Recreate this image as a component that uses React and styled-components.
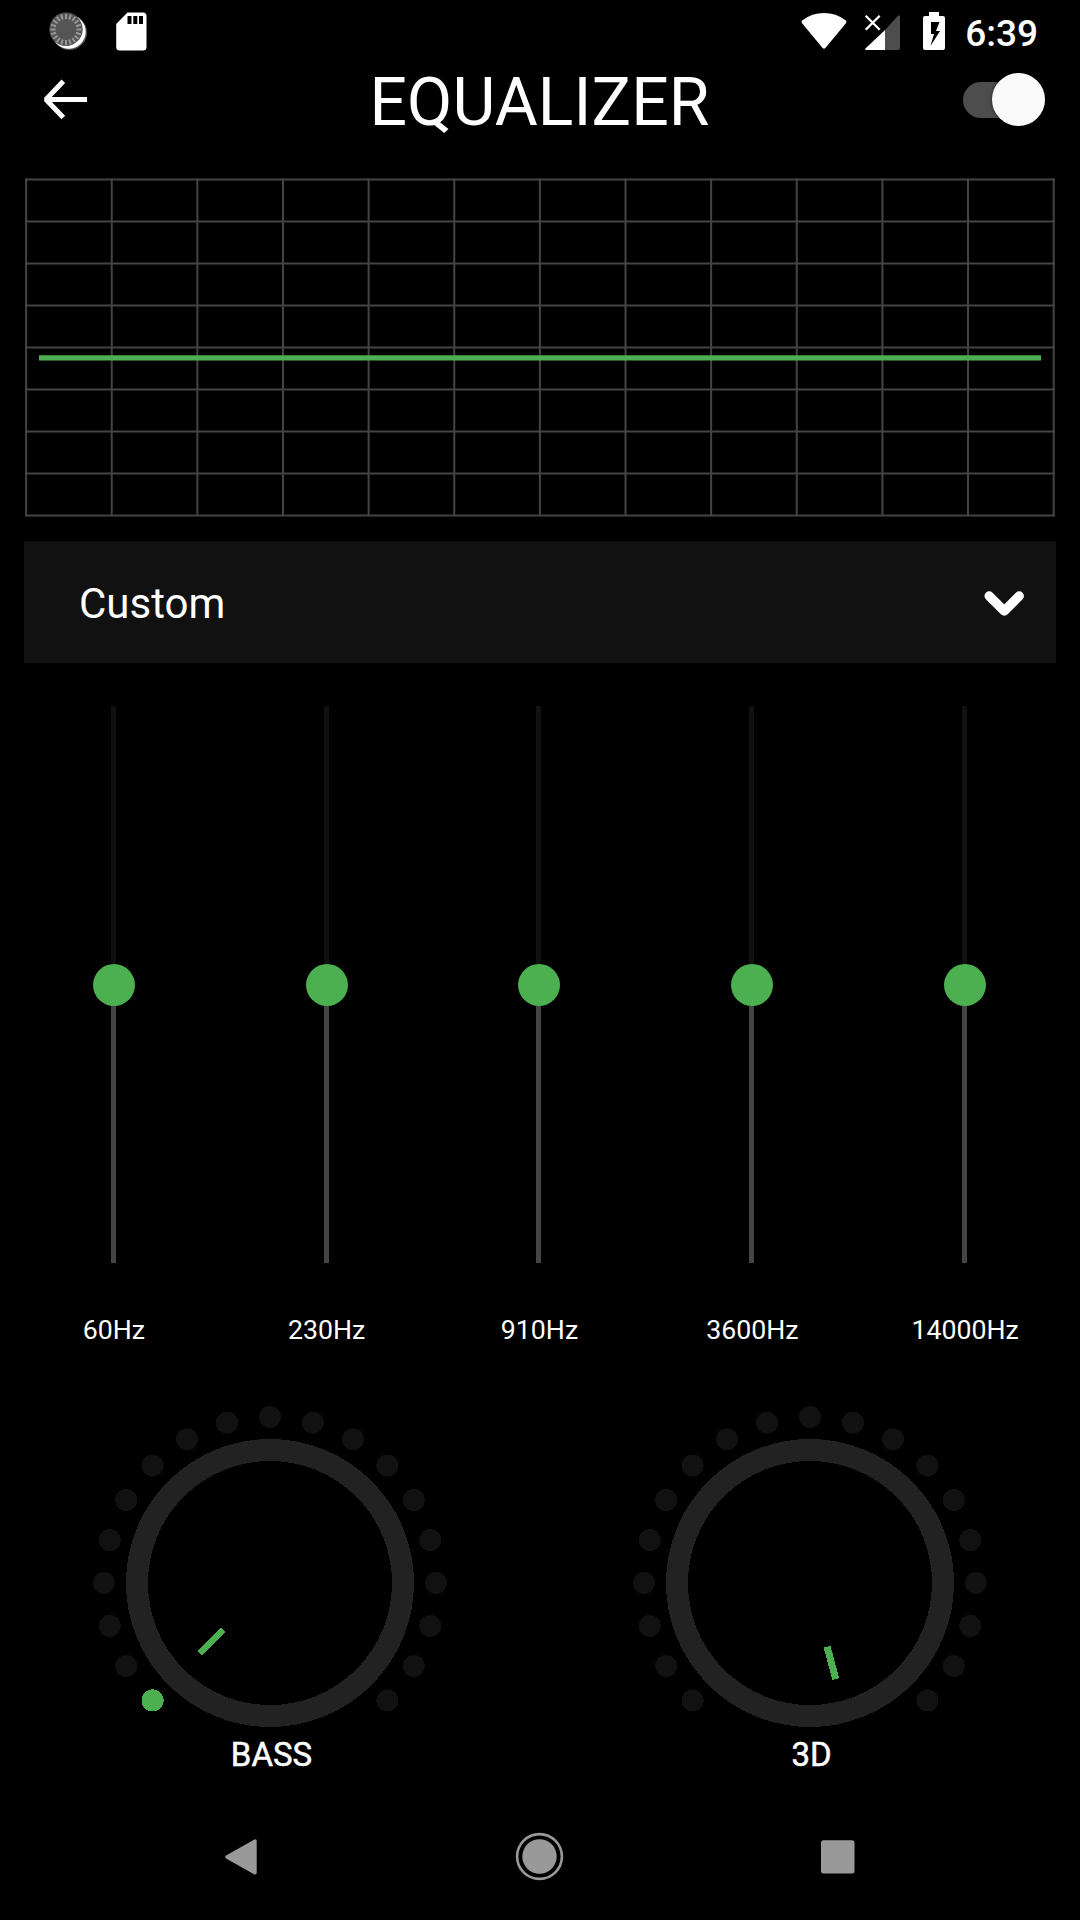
import React from "react";
import styled, { createGlobalStyle } from "styled-components";

const GREEN = "#4caf50";

const GlobalStyle = createGlobalStyle`
  *, *::before, *::after { box-sizing: border-box; }
  body { margin: 0; background: #000; }
  svg { display: block; flex: none; }
`;

const Screen = styled.main`
  width: 1080px;
  height: 1920px;
  display: flex;
  flex-direction: column;
  background: #000;
  color: #fff;
  font-family: Roboto, "Liberation Sans", sans-serif;
  overflow: hidden;
`;

const StatusBar = styled.div`
  height: 63px;
  flex: none;
  display: flex;
  justify-content: space-between;
  padding: 0 42px 0 48px;
`;

const StatusGroup = styled.div`
  display: flex;
  align-items: flex-start;
`;

const Clock = styled.time`
  margin-left: 15px;
  padding-top: 12px;
  font-size: 37px;
  line-height: 43px;
  font-weight: 500;
`;

const Header = styled.header`
  height: 115px;
  flex: none;
  display: grid;
  grid-template-columns: 200px 1fr 200px;
`;

const BackButton = styled.button`
  justify-self: start;
  align-self: start;
  margin: 13px 0 0 40px;
  padding: 0;
  border: 0;
  background: none;
  color: #fff;
`;

const Title = styled.h1`
  margin: 0;
  padding: 1px 1px 0 0;
  text-align: center;
  font-size: 66px;
  letter-spacing: 0.1px;
  line-height: 77px;
  font-weight: 400;
`;

const Toggle = styled.div`
  justify-self: end;
  display: flex;
  align-items: center;
  justify-content: flex-end;
  width: 82px;
  height: 36px;
  margin: 19px 35px 0 0;
  border-radius: 18px;
  background: #4d4d4d;
`;

const ToggleThumb = styled.span`
  width: 53px;
  height: 53px;
  flex: none;
  margin-bottom: 1px;
  border-radius: 50%;
  background: #fafafa;
  box-shadow: 0 0 4px rgba(0, 0, 0, 0.5);
`;

const Graph = styled.section`
  height: 363px;
  flex: none;
  padding-left: 24px;
`;

const PresetSelect = styled.div`
  height: 122px;
  flex: none;
  margin: 0 24px;
  padding: 3px 28px 0 55px;
  display: flex;
  align-items: center;
  justify-content: space-between;
  background: #111;
  font-size: 42px;
  line-height: 50px;
`;

const Bands = styled.section`
  flex: none;
  height: 695px;
  display: grid;
  grid-template-columns: repeat(5, 212.8px);
  padding: 43px 0 0 7px;
`;

const Band = styled.div`
  display: flex;
  flex-direction: column;
  align-items: center;
`;

const Slider = styled.div`
  display: flex;
  flex-direction: column;
  align-items: center;
  height: 557px;
`;

const Track = styled.span`
  width: 5px;
  flex: 1;
  background: ${(p) => (p.$filled ? "#444" : "#111")};
`;

const Thumb = styled.span`
  width: 42px;
  height: 42px;
  flex: none;
  margin-left: 1px;
  border-radius: 50%;
  background: ${GREEN};
`;

const BandLabel = styled.span`
  margin-top: 51px;
  padding-left: 1px;
  font-size: 26.7px;
  line-height: 32px;
`;

const Knobs = styled.section`
  flex: none;
  height: 436px;
  display: grid;
  grid-template-columns: 1fr 1fr;
`;

const KnobCell = styled.div`
  display: flex;
  flex-direction: column;
  align-items: center;
  padding-top: 47px;
`;

const KnobLabel = styled.span`
  padding-left: 3px;
  margin-top: -2px;
  font-size: 33px;
  line-height: 40px;
  -webkit-text-stroke: 0.5px #fff;
`;

const NavBar = styled.nav`
  flex: 1;
  display: grid;
  grid-template-columns: repeat(3, 298px);
  justify-content: center;
  align-items: center;
  justify-items: center;
  color: #999;
`;

const spokes = Array.from({ length: 20 }, (_, i) => i * 18);

function SyncIcon() {
  return (
    <svg width="42" height="60" viewBox="48 0 42 60">
      <circle cx="69.5" cy="32.5" r="17.5" fill="#555" />
      <circle cx="68.7" cy="31.7" r="17" fill="#fff" />
      <circle cx="66" cy="29.3" r="16.7" fill="#555" />
      {spokes.map((a) => (
        <path
          key={a}
          d="M66 13.8V19"
          stroke="#999"
          strokeWidth="1.9"
          transform={`rotate(${a} 66 29.5)`}
        />
      ))}
    </svg>
  );
}

function SdIcon() {
  return (
    <svg width="60" height="60" viewBox="90 0 60 60">
      <path
        fill="#fff"
        fillRule="evenodd"
        d="M127.5 12.4H143a3.5 3.5 0 0 1 3.5 3.5V47a3.5 3.5 0 0 1-3.5 3.5H119.700a3.500 3.500 0 0 1-3.500-3.500V24ZM127.500 16V24h4V16ZM133.300 16V24h4V16ZM139 16V24h4V16Z"
      />
    </svg>
  );
}

function SystemIcons() {
  return (
    <svg width="150" height="60" viewBox="800 0 150 60">
      <path
        fill="#fff"
        d="M822.600 48 801.900 23Q801 21.500 802.500 20.300 812 13 824 13 836 13 845.500 20.300 847 21.500 846.100 23L825.400 48Q824 49.600 822.600 48Z"
      />
      <path fill="#4d4d4d" d="M885 30 898 15.800Q900 14 900 17V48a2 2 0 0 1-2 2H885Z" />
      <path fill="#fff" d="M885 30V50H867Q864 50 865.500 48.500Z" />
      <path d="m865.700 15.700 14 14m0-14-14 14" stroke="#fff" strokeWidth="2.300" />
      <path
        fill="#fff"
        fillRule="evenodd"
        d="M929 12H939V16H943a2 2 0 0 1 2 2V48a2 2 0 0 1-2 2H925a2 2 0 0 1-2-2V18a2 2 0 0 1 2-2H929ZM931 22V34H934L930.500 46 940 31H936L939.500 22Z"
      />
    </svg>
  );
}

function EqGraph() {
  return (
    <svg width="1032" height="342" viewBox="24 178 1032 342">
      <g stroke="#444" strokeWidth="2">
        {Array.from({ length: 13 }, (_, i) => (
          <path key={i} d={`M${26.1 + i * 85.63} 178.500V516.300`} />
        ))}
        {Array.from({ length: 9 }, (_, i) => (
          <path key={i} d={`M25 ${179.5 + i * 42}H1055`} />
        ))}
      </g>
      <path d="M39 357.800H1041" stroke={GREEN} strokeWidth="5.250" />
    </svg>
  );
}

const dotAngles = Array.from({ length: 19 }, (_, i) => -135 + i * 15);

function Knob({ angle, lit }) {
  return (
    <svg width="356" height="332" viewBox="-178 -178 356 332" shapeRendering="crispEdges">
      <circle r="133" fill="none" stroke="#222" strokeWidth="22" />
      {dotAngles.map((a, i) => (
        <circle
          key={a}
          cx={166 * Math.sin((a * Math.PI) / 180)}
          cy={-166 * Math.cos((a * Math.PI) / 180)}
          r="11"
          fill={i < lit ? GREEN : "#111"}
        />
      ))}
      <path d="M0 -66V-99.500" stroke={GREEN} strokeWidth="7" transform={`rotate(${angle})`} />
    </svg>
  );
}

const bands = ["60Hz", "230Hz", "910Hz", "3600Hz", "14000Hz"];

const knobs = [
  { label: "BASS", angle: 225, lit: 1 },
  { label: "3D", angle: 165, lit: 0 },
];

export default function App() {
  return (
    <Screen>
      <GlobalStyle />
      <StatusBar>
        <StatusGroup>
          <SyncIcon />
          <SdIcon />
        </StatusGroup>
        <StatusGroup>
          <SystemIcons />
          <Clock>6:39</Clock>
        </StatusGroup>
      </StatusBar>

      <Header>
        <BackButton aria-label="Back">
          <svg width="50" height="46" viewBox="40 76 50 46" fill="none" stroke="currentColor" strokeWidth="5">
            <path d="M87 99.500H48M63.300 81.300 46 99.500 63.300 117.500" strokeLinejoin="bevel" />
          </svg>
        </BackButton>
        <Title>EQUALIZER</Title>
        <Toggle role="switch" aria-checked="true">
          <ToggleThumb />
        </Toggle>
      </Header>

      <Graph>
        <EqGraph />
      </Graph>

      <PresetSelect>
        Custom
        <svg width="48" height="40" viewBox="980 583.500 48 40" fill="none" stroke="#fff" strokeWidth="9.500">
          <path strokeLinecap="round" d="M989.200 595.500 1004.300 610.500 1019.200 595.500" strokeLinejoin="round" />
        </svg>
      </PresetSelect>

      <Bands>
        {bands.map((label) => (
          <Band key={label}>
            <Slider>
              <Track />
              <Thumb />
              <Track $filled />
            </Slider>
            <BandLabel>{label}</BandLabel>
          </Band>
        ))}
      </Bands>

      <Knobs>
        {knobs.map(({ label, angle, lit }) => (
          <KnobCell key={label}>
            <Knob angle={angle} lit={lit} />
            <KnobLabel>{label}</KnobLabel>
          </KnobCell>
        ))}
      </Knobs>

      <NavBar>
        <svg width="50" height="50" viewBox="217 1832 50 50" fill="currentColor">
          <path d="M226 1855.500 254 1839.700Q256.700 1838.500 256.700 1841.500V1872.500Q256.700 1875.500 254 1874.200L226 1858.500Q224.500 1857 226 1855.500Z" />
        </svg>
        <svg width="50" height="50" viewBox="-24.500 -24.500 50 50">
          <circle r="22.400" fill="none" stroke="currentColor" strokeWidth="2.600" />
          <circle r="17.200" fill="currentColor" />
        </svg>
        <svg width="50" height="50" viewBox="813 1832 50 50" fill="currentColor">
          <rect x="821" y="1840.300" width="33.500" height="33.300" rx="2.500" />
        </svg>
      </NavBar>
    </Screen>
  );
}
